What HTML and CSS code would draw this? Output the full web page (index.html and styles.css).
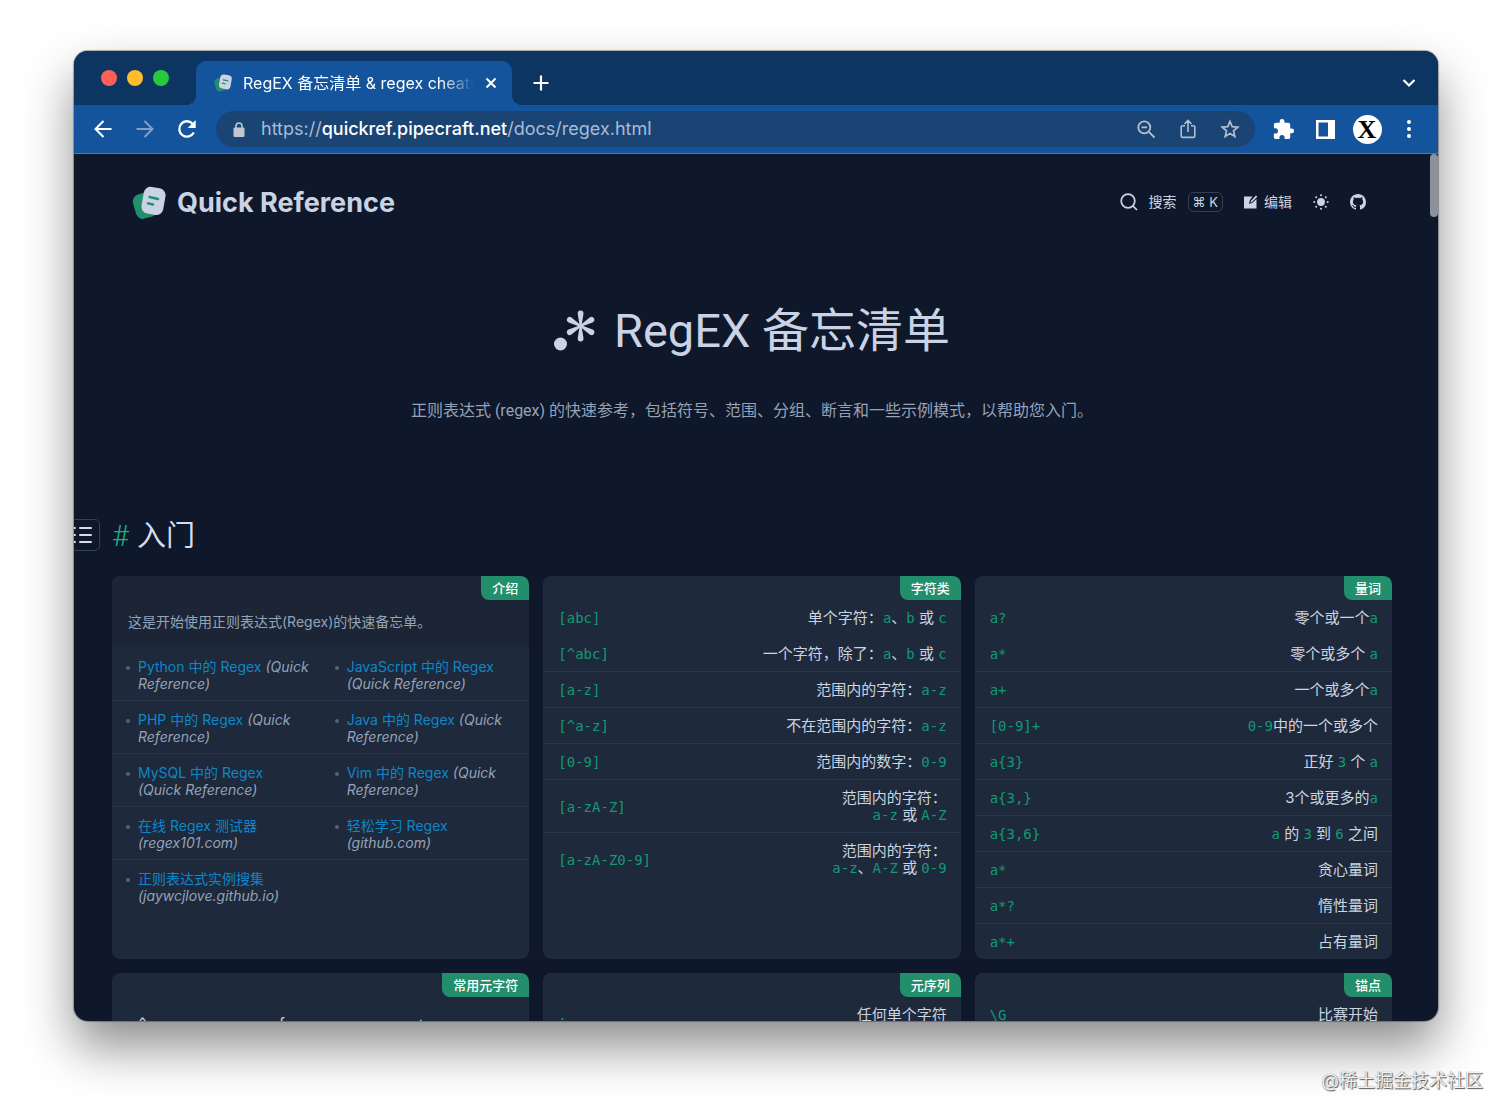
FILE: index.html
```html
<!DOCTYPE html>
<html lang="zh-CN">
<head>
    <meta charset="UTF-8">
    <meta name="viewport" content="width=device-width, initial-scale=1">
    <title>RegEX 备忘清单 &amp; regex cheatsheet</title>
    <link rel="stylesheet" href="styles.css">
</head>
<body>
<!-- 共用图标 -->
<svg class="defs" aria-hidden="true">
    <symbol id="logo" viewBox="0 0 34 34">
        <rect x="2" y="7" width="22" height="25" rx="7" fill="#228e6c" transform="rotate(-16 13 19)"/>
        <rect x="10.500" y="1.500" width="22" height="27" rx="7" fill="#c9d3e3" transform="rotate(10 22 15)"/>
        <path d="M17.500 11l8.500 2M16 17.300l5 1.200" stroke="#228e6c" stroke-width="2.400" stroke-linecap="round"/>
    </symbol>
</svg>

<div class="window">
    <!-- 标签栏 -->
    <div class="tabstrip">
        <div class="lights">
            <span class="light red"></span>
            <span class="light yellow"></span>
            <span class="light green"></span>
        </div>
        <div class="tab">
            <svg class="favicon"><use href="#logo"/></svg>
            <span class="tab-title">RegEX 备忘清单 &amp; regex cheatsheet</span>
            <button class="tab-close" aria-label="关闭标签页">
                <svg width="12" height="12" viewBox="0 0 12 12"><path d="M1.500 1.500l9 9M10.500 1.500l-9 9" stroke="#fff" stroke-width="2"/></svg>
            </button>
        </div>
        <button class="icon-btn tab-new" aria-label="新标签页">
            <svg width="16" height="16" viewBox="0 0 16 16"><path d="M8 .5v15M.5 8h15" stroke="#fff" stroke-width="2.200"/></svg>
        </button>
        <button class="icon-btn tab-search" aria-label="搜索标签页">
            <svg width="14" height="10" viewBox="0 0 14 10"><path d="M1.500 2L7 7.500 12.500 2" fill="none" stroke="#fff" stroke-width="2.200"/></svg>
        </button>
    </div>

    <!-- 工具栏 -->
    <div class="toolbar">
        <button class="icon-btn" aria-label="后退">
            <svg width="18" height="18" viewBox="0 0 18 18" fill="none" stroke="#fff" stroke-width="2"><path d="M17.500 9H2M9.500 1L1.500 9l8 8"/></svg>
        </button>
        <button class="icon-btn" aria-label="前进">
            <svg width="18" height="18" viewBox="0 0 18 18" fill="none" stroke="#7f9fc9" stroke-width="2"><path d="M.5 9H16M8.500 1l8 8-8 8"/></svg>
        </button>
        <button class="icon-btn" aria-label="刷新">
            <svg width="20" height="20" viewBox="0 0 20 20"><path d="M16.800 13.500A7.700 7.700 0 1 1 15.600 4.700L17 6.300" fill="none" stroke="#fff" stroke-width="2.300"/><path d="M18.700 1v8h-8z" fill="#fff"/></svg>
        </button>
        <div class="omnibox">
            <svg class="lock" width="12" height="15" viewBox="0 0 12 15"><rect x="0.500" y="5.500" width="11" height="9.500" rx="1.300" fill="#bfc6d2"/><path d="M3 6.500V4a3 3 0 0 1 6 0v2.500" fill="none" stroke="#bfc6d2" stroke-width="1.600"/></svg>
            <div class="url" role="textbox" aria-label="地址">https://<span>quickref.pipecraft.net</span>/docs/regex.html</div>
            <button class="icon-btn" aria-label="缩放">
                <svg width="19" height="19" viewBox="0 0 19 19" fill="none" stroke="#b3bfce" stroke-width="1.800"><circle cx="7.300" cy="7.300" r="6"/><path d="M11.800 11.800l5.700 5.700M4.500 7.300h5.600"/></svg>
            </button>
            <button class="icon-btn" aria-label="分享">
                <svg width="16" height="20" viewBox="0 0 16 20" fill="none" stroke="#b3bfce" stroke-width="1.600"><path d="M5 6.800H2.500a1.300 1.300 0 0 0-1.300 1.300v9a1.300 1.300 0 0 0 1.300 1.300h11a1.300 1.300 0 0 0 1.300-1.300v-9a1.300 1.300 0 0 0-1.300-1.300H11M8 13V1.800M4.500 5L8 1.500 11.500 5"/></svg>
            </button>
            <button class="icon-btn" aria-label="收藏">
                <svg width="20" height="20" viewBox="0 0 20 20"><path d="M10 2.500l2.200 5.200 5.600.5-4.300 3.700 1.300 5.500-4.800-2.900-4.800 2.900 1.300-5.500-4.300-3.700 5.600-.5z" fill="none" stroke="#b3bfce" stroke-width="1.700"/></svg>
            </button>
        </div>
        <button class="icon-btn" aria-label="扩展程序">
            <svg width="23" height="23" viewBox="0 0 24 24"><path d="M20.500 11H19V7c0-1.100-.9-2-2-2h-4V3.500a2.500 2.500 0 0 0-5 0V5H4c-1.100 0-2 .9-2 2v3.800h1.500a2.700 2.700 0 0 1 0 5.400H2V20c0 1.100.9 2 2 2h3.800v-1.500a2.700 2.700 0 0 1 5.400 0V22H17c1.100 0 2-.9 2-2v-4h1.500a2.500 2.500 0 0 0 0-5z" fill="#fff"/></svg>
        </button>
        <button class="icon-btn" aria-label="侧边栏">
            <svg width="19" height="19" viewBox="0 0 19 19"><path fill-rule="evenodd" d="M0 0h19v19H0zM2.500 2.500v14h9.500v-14z" fill="#fff"/></svg>
        </button>
        <button class="icon-btn" aria-label="个人资料"><span class="avatar">X</span></button>
        <button class="icon-btn" aria-label="菜单">
            <svg width="4" height="18" viewBox="0 0 4 18" fill="#fff"><circle cx="2" cy="2" r="2"/><circle cx="2" cy="9" r="2"/><circle cx="2" cy="16" r="2"/></svg>
        </button>
    </div>

    <!-- 网页内容 -->
    <div class="page">
        <span class="scroll-thumb"></span>
        <header class="site-header">
            <a class="brand" href="#"><svg class="brand-logo"><use href="#logo"/></svg>Quick Reference</a>
            <nav class="menu">
                <button class="search">
                    <svg width="18" height="18" viewBox="0 0 18 18" fill="none" stroke="#cbd5e1" stroke-width="1.700"><circle cx="8" cy="8" r="6.800"/><path d="M13 13l4 4"/></svg>
                    <span>搜索</span>
                    <kbd>⌘ K</kbd>
                </button>
                <a class="edit" href="#">
                    <svg width="14" height="14" viewBox="0 0 14 14"><path d="M0 1.500h8.500L5.800 5.200 5 9l3.800-1.500L12.500 4v9.500H0z" fill="#cbd5e1"/><path d="M6.500 7.500L7 5.700 12 .5l1.300 1.300-5.200 5.200z" fill="#cbd5e1"/></svg>
                    编辑
                </a>
                <button class="theme" aria-label="切换主题">
                    <svg width="16" height="16" viewBox="0 0 16 16" fill="#cbd5e1"><circle cx="8" cy="8" r="3.900"/><circle cx="8" cy="1.300" r="1"/><circle cx="8" cy="14.700" r="1"/><circle cx="1.300" cy="8" r="1"/><circle cx="14.700" cy="8" r="1"/><circle cx="3.200" cy="3.200" r="1"/><circle cx="12.800" cy="3.200" r="1"/><circle cx="3.200" cy="12.800" r="1"/><circle cx="12.800" cy="12.800" r="1"/></svg>
                </button>
                <a class="github" href="#" aria-label="GitHub">
                    <svg width="16" height="16" viewBox="0 0 16 16"><path fill="#cbd5e1" d="M8 0C3.580 0 0 3.580 0 8c0 3.540 2.290 6.530 5.470 7.590.4.070.55-.17.55-.38 0-.19-.01-.82-.01-1.490-2.010.37-2.530-.49-2.690-.94-.09-.23-.48-.94-.82-1.130-.28-.15-.68-.52-.01-.53.63-.01 1.080.58 1.230.82.72 1.210 1.870.87 2.330.66.07-.52.28-.87.51-1.070-1.780-.2-3.640-.89-3.640-3.950 0-.87.31-1.590.82-2.150-.08-.2-.36-1.020.08-2.120 0 0 .67-.21 2.200.82.64-.18 1.320-.27 2-.27s1.360.09 2 .27c1.530-1.040 2.200-.82 2.200-.82.44 1.100.16 1.920.08 2.120.51.56.82 1.270.82 2.150 0 3.070-1.870 3.750-3.650 3.950.29.25.54.73.54 1.480 0 1.070-.01 1.930-.01 2.200 0 .21.15.46.55.38A8.010 8.010 0 0 0 16 8c0-4.420-3.580-8-8-8z"/></svg>
                </a>
            </nav>
        </header>

        <div class="hero">
            <h1>
                <svg width="42" height="42" viewBox="0 0 42 42" fill="#c9d3e5">
                    <circle cx="6.500" cy="34" r="6.500"/>
                    <path d="M25.700 16L23.700 3.800a2.900 3.200 0 0 1 5.800 0L27.500 16z"/>
                    <path d="M25.700 16L23.700 3.800a2.900 3.200 0 0 1 5.800 0L27.500 16z" transform="rotate(60 26.600 16)"/>
                    <path d="M25.700 16L23.700 3.800a2.900 3.200 0 0 1 5.800 0L27.500 16z" transform="rotate(120 26.600 16)"/>
                    <path d="M25.700 16L23.700 3.800a2.900 3.200 0 0 1 5.800 0L27.500 16z" transform="rotate(180 26.600 16)"/>
                    <path d="M25.700 16L23.700 3.800a2.900 3.200 0 0 1 5.800 0L27.500 16z" transform="rotate(240 26.600 16)"/>
                    <path d="M25.700 16L23.700 3.800a2.900 3.200 0 0 1 5.800 0L27.500 16z" transform="rotate(300 26.600 16)"/>
                </svg>
                RegEX 备忘清单
            </h1>
            <p>正则表达式 (regex) 的快速参考，包括符号、范围、分组、断言和一些示例模式，以帮助您入门。</p>
        </div>

        <div class="section-title">
            <button class="toc" aria-label="目录">
                <svg width="19" height="18" viewBox="0 0 19 18" stroke="#d5dcea" stroke-width="2" stroke-linecap="round"><path d="M1 2h1M1 9h1M1 16h1M7 2h11M7 9h11M7 16h11"/></svg>
            </button>
            <h2><a href="#">#</a>入门</h2>
        </div>

        <main class="cards">
            <section class="card">
                <h3>介绍</h3>
                <p class="intro">这是开始使用正则表达式(Regex)的快速备忘单。</p>
                <ul class="links">
                    <li><a href="#">Python 中的 Regex</a> <em>(Quick Reference)</em></li>
                    <li><a href="#">JavaScript 中的 Regex</a> <em>(Quick Reference)</em></li>
                    <li><a href="#">PHP 中的 Regex</a> <em>(Quick Reference)</em></li>
                    <li><a href="#">Java 中的 Regex</a> <em>(Quick Reference)</em></li>
                    <li><a href="#">MySQL 中的 Regex</a><br><em>(Quick Reference)</em></li>
                    <li><a href="#">Vim 中的 Regex</a> <em>(Quick Reference)</em></li>
                    <li><a href="#">在线 Regex 测试器</a><br><em>(regex101.com)</em></li>
                    <li><a href="#">轻松学习 Regex</a><br><em>(github.com)</em></li>
                    <li class="wide"><a href="#">正则表达式实例搜集</a><br><em>(jaywcjlove.github.io)</em></li>
                </ul>
            </section>

            <section class="card">
                <h3>字符类</h3>
                <table>
                    <tr><td><code>[abc]</code></td><td>单个字符：<code>a</code>、<code>b</code> 或 <code>c</code></td></tr>
                    <tr><td><code>[^abc]</code></td><td>一个字符，除了：<code>a</code>、<code>b</code> 或 <code>c</code></td></tr>
                    <tr><td><code>[a-z]</code></td><td>范围内的字符：<code>a-z</code></td></tr>
                    <tr><td><code>[^a-z]</code></td><td>不在范围内的字符：<code>a-z</code></td></tr>
                    <tr><td><code>[0-9]</code></td><td>范围内的数字：<code>0-9</code></td></tr>
                    <tr><td><code>[a-zA-Z]</code></td><td>范围内的字符：<br><code>a-z</code> 或 <code>A-Z</code></td></tr>
                    <tr><td><code>[a-zA-Z0-9]</code></td><td>范围内的字符：<br><code>a-z</code>、<code>A-Z</code> 或 <code>0-9</code></td></tr>
                </table>
            </section>

            <section class="card">
                <h3>量词</h3>
                <table>
                    <tr><td><code>a?</code></td><td>零个或一个<code>a</code></td></tr>
                    <tr><td><code>a*</code></td><td>零个或多个 <code>a</code></td></tr>
                    <tr><td><code>a+</code></td><td>一个或多个<code>a</code></td></tr>
                    <tr><td><code>[0-9]+</code></td><td><code>0-9</code>中的一个或多个</td></tr>
                    <tr><td><code>a{3}</code></td><td>正好 <code>3</code> 个 <code>a</code></td></tr>
                    <tr><td><code>a{3,}</code></td><td>3个或更多的<code>a</code></td></tr>
                    <tr><td><code>a{3,6}</code></td><td><code>a</code> 的 <code>3</code> 到 <code>6</code> 之间</td></tr>
                    <tr><td><code>a*</code></td><td>贪心量词</td></tr>
                    <tr><td><code>a*?</code></td><td>惰性量词</td></tr>
                    <tr><td><code>a*+</code></td><td>占有量词</td></tr>
                </table>
            </section>

            <section class="card">
                <h3>常用元字符</h3>
                <ul class="chars">
                    <li>^</li>
                    <li>{</li>
                    <li>+</li>
                </ul>
            </section>

            <section class="card">
                <h3>元序列</h3>
                <table>
                    <tr><td><code>.</code></td><td>任何单个字符</td></tr>
                </table>
            </section>

            <section class="card">
                <h3>锚点</h3>
                <table>
                    <tr><td><code>\G</code></td><td>比赛开始</td></tr>
                </table>
            </section>
        </main>
    </div>
</div>

<footer class="watermark">@稀土掘金技术社区</footer>
</body>
</html>
```
FILE: styles.css
```css
* {
    box-sizing: border-box;
}

body {
    margin: 0;
    height: 100vh;
    padding: 51px 74px 0;
    display: flex;
    flex-direction: column;
    overflow: hidden;
    background-color: #fff;
    font-family: Inter, "Noto Sans CJK SC", sans-serif;
    font-size: 15px;
    line-height: 17px;
    color: #cbd5e1;
}

button {
    padding: 0;
    border: none;
    background: none;
    color: inherit;
    font: inherit;
    cursor: pointer;
}

a {
    color: inherit;
    text-decoration: none;
}

svg {
    flex: none;
}

.defs {
    position: absolute;
    width: 0;
    height: 0;
}

/* 浏览器窗口 */
.window {
    flex: 1;
    min-height: 0;
    display: flex;
    flex-direction: column;
    overflow: hidden;
    border-radius: 14px;
    background-color: #0f172a;
    box-shadow: 0 0 1px 1px rgba(0, 0, 0, 0.3), 0 26px 50px rgba(0, 0, 0, 0.45);
}

.icon-btn {
    flex: none;
    width: 42px;
    height: 36px;
    display: flex;
    justify-content: center;
    align-items: center;
}

/* 标签栏 */
.tabstrip {
    flex: none;
    height: 54px;
    display: flex;
    align-items: flex-end;
    padding: 0 8px 0 27px;
    background-color: #0c3562;
}

.lights {
    display: flex;
    gap: 10px;
    align-self: center;
    margin-right: 27px;
}

.light {
    width: 16px;
    height: 16px;
    border-radius: 50%;
}

.red {
    background-color: #ff5f57;
}

.yellow {
    background-color: #febc2e;
}

.green {
    background-color: #28c840;
}

.tab {
    position: relative;
    width: 316px;
    height: 44px;
    display: flex;
    align-items: center;
    padding: 0 14px 0 18px;
    border-radius: 10px 10px 0 0;
    background-color: #14549c;
    color: #fff;
}

/* 标签底部的外弧角 */
.tab::before,
.tab::after {
    content: "";
    position: absolute;
    bottom: 0;
    width: 10px;
    height: 10px;
}

.tab::before {
    right: 100%;
    background: radial-gradient(circle at 0 0, transparent 10px, #14549c 10px);
}

.tab::after {
    left: 100%;
    background: radial-gradient(circle at 100% 0, transparent 10px, #14549c 10px);
}

.favicon {
    width: 18px;
    height: 18px;
    margin-right: 11px;
}

.tab-title {
    flex: 1;
    overflow: hidden;
    white-space: nowrap;
    font-size: 16px;
    line-height: 24px;
    -webkit-mask-image: linear-gradient(to right, #000 85%, transparent);
    mask-image: linear-gradient(to right, #000 85%, transparent);
}

.tab-close {
    width: 14px;
    height: 14px;
    display: flex;
    align-items: center;
    justify-content: center;
    margin-left: 10px;
}

.tab-new,
.tab-search {
    height: 44px;
    margin-left: 8px;
}

.tab-search {
    margin-left: auto;
}

/* 工具栏 */
.toolbar {
    flex: none;
    height: 49px;
    display: flex;
    align-items: center;
    padding: 0 8px;
    border-bottom: 1px solid #4a7bb4;
    background-color: #14549c;
}

.omnibox {
    flex: 1;
    height: 36px;
    display: flex;
    align-items: center;
    margin: 0 7px 0 8px;
    padding: 0 4px 0 17px;
    border-radius: 18px;
    background-color: #1a4474;
}

.url {
    flex: 1;
    margin-left: 16px;
    font-size: 18px;
    line-height: 24px;
    color: #a9bbd6;
}

.url span {
    font-weight: 500;
    color: #fff;
}

.avatar {
    width: 29px;
    height: 29px;
    border-radius: 50%;
    background-color: #fff;
    color: #000;
    font: bold 26px/29px "Liberation Serif", serif;
    text-align: center;
}

/* 网页 */
.page {
    position: relative;
    flex: 1;
    min-height: 0;
    overflow: hidden;
    padding-right: 8px;
}

.scroll-thumb {
    position: absolute;
    top: 0;
    right: 0;
    width: 8px;
    height: 63px;
    border-radius: 4px;
    background-color: #8b919d;
}

.site-header {
    height: 96px;
    display: flex;
    justify-content: space-between;
    align-items: center;
    padding: 0 64px 0 58px;
}

.brand {
    display: flex;
    align-items: center;
    gap: 11px;
    padding-top: 2px;
    font-size: 27px;
    line-height: 34px;
    font-weight: 700;
    color: #c9d3e3;
}

.brand-logo {
    width: 34px;
    height: 34px;
}

.menu {
    display: flex;
    align-items: center;
    gap: 21px;
    font-size: 14px;
    line-height: 20px;
}

.menu a,
.menu button {
    display: flex;
    align-items: center;
}

.menu .search {
    gap: 11px;
}

.menu .edit {
    gap: 6px;
}

kbd {
    padding: 0 4px;
    border: 1px solid #334155;
    border-radius: 6px;
    font-family: Inter, "DejaVu Sans", sans-serif;
    font-size: 13px;
    line-height: 18px;
}

/* 标题 */
.hero {
    padding-top: 51px;
    text-align: center;
}

.hero h1 {
    display: flex;
    justify-content: center;
    align-items: center;
    gap: 18px;
    margin: 0;
    font-family: Roboto, "Noto Sans CJK SC", sans-serif;
    font-size: 47px;
    line-height: 60px;
    font-weight: 400;
    color: #c9d3e5;
}

.hero p {
    margin: 38px 0 0;
    font-family: Roboto, "Noto Sans CJK SC", sans-serif;
    font-size: 16px;
    line-height: 24px;
    color: #94a3b8;
}

.section-title {
    position: relative;
    margin-top: 93px;
    padding: 0 38px;
}

.section-title h2 {
    display: flex;
    gap: 8px;
    margin: 0;
    font-family: Roboto, "Noto Sans CJK SC", sans-serif;
    font-size: 29px;
    line-height: 40px;
    font-weight: 400;
    color: #d5dcf0;
}

.section-title h2 a {
    font-weight: 300;
    color: #10b981;
}

.toc {
    position: absolute;
    left: -10px;
    top: 3px;
    width: 36px;
    height: 32px;
    display: flex;
    align-items: center;
    justify-content: center;
    border: 1px solid #334155;
    border-radius: 5px;
}

/* 卡片 */
.cards {
    display: grid;
    grid-template-columns: repeat(3, 1fr);
    gap: 14px;
    padding: 20px 38px;
}

.card {
    position: relative;
    overflow: hidden;
    padding-top: 23px;
    border-radius: 8px;
    background-color: #1e293b;
}

.card h3 {
    position: absolute;
    top: 0;
    right: 0;
    margin: 0;
    padding: 0 11px;
    border-radius: 0 8px 0 8px;
    background-color: #228e6c;
    color: #fff;
    font-size: 13px;
    line-height: 24px;
    font-weight: 500;
}

.intro {
    margin: -23px 0 0;
    padding: 36px 16px 16px;
    background-color: #1b2536;
    color: #94a3b8;
    font-size: 14px;
    line-height: 19px;
}

.links,
.chars {
    display: grid;
    grid-template-columns: 1fr 1fr;
    margin: 0;
    padding: 0;
    list-style: none;
}

.links li {
    position: relative;
    padding: 10px 8px 8px 26px;
    border-top: 1px solid #273448;
    color: #94a3b8;
    font-size: 14px;
}

.links .wide {
    grid-column: span 2;
}

.links li:nth-child(-n+2) {
    border-top-color: transparent;
}

.links li::before {
    content: "";
    position: absolute;
    left: 14px;
    top: 18px;
    width: 4px;
    height: 4px;
    border-radius: 50%;
    background-color: #556275;
}

.links a {
    color: #0e86c9;
}

.chars {
    grid-template-columns: 1fr 1fr 1fr;
    padding-top: 18px;
}

.chars li {
    padding-left: 26px;
    line-height: 20px;
    font-family: "DejaVu Sans Mono", monospace;
}

table {
    width: 100%;
    border-spacing: 0;
}

td {
    padding: 9px 14px 9px 15px;
    border-top: 1px solid #2a374b;
}

tr:nth-child(-n+2) td {
    border-top-color: transparent;
}

td:last-child {
    text-align: right;
}

code {
    font-family: "DejaVu Sans Mono", monospace;
    font-size: 14px;
    line-height: 1;
    color: #129a75;
}

/* 水印 */
.watermark {
    flex: none;
    height: 98px;
    margin-right: -45px;
    padding-top: 48px;
    font-size: 18px;
    line-height: 24px;
    text-align: right;
    color: #f2f2f2;
    text-shadow: 1px 1px 1px #555, 0 0 1px #777;
}
```
